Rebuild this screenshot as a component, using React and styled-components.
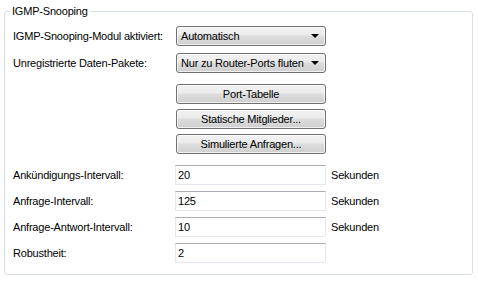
import styled, { createGlobalStyle } from 'styled-components';

const GlobalStyle = createGlobalStyle`
  body {
    margin: 0;
    background: #fff;
    font-family: "Liberation Sans", Arial, sans-serif;
    font-size: 11px;
    letter-spacing: -0.2px;
    color: #000;
  }
`;

const Page = styled.div`
  padding: 5px 5px 0 4px;
  width: 478px;
  height: 281px;
  box-sizing: border-box;
`;

const Group = styled.fieldset`
  margin: 0;
  padding: 0 0 10px 0;
  border: 1px solid #d5dfe5;
  border-radius: 3px;
  box-sizing: border-box;
  height: 270px;
`;

const Legend = styled.legend`
  margin-left: 5px;
  padding: 0 2px;
  line-height: 13px;
`;

const Content = styled.div`
  display: flex;
  flex-direction: column;
  padding: 8px 0 0 8px;
`;

const Row = styled.div`
  display: grid;
  grid-template-columns: 158px 150px auto;
  column-gap: 5px;
  align-items: center;
  margin-top: ${(p) => p.$top || 0}px;
`;

const Label = styled.span`
  white-space: nowrap;
`;

const raised = `
  border: 1px solid #707070;
  border-radius: 3px;
  box-sizing: border-box;
  height: 20px;
  background: linear-gradient(#f2f2f2 0%, #ebebeb 45%, #dddddd 50%, #cfcfcf 100%);
  box-shadow: inset 0 0 0 1px rgba(255, 255, 255, 0.7);
  font: inherit;
  letter-spacing: inherit;
  color: #000;
`;

const Select = styled.div`
  ${raised}
  grid-column: 2;
  display: flex;
  align-items: center;
  justify-content: space-between;
  padding: 0 6px 0 4px;
  white-space: nowrap;
`;

const Arrow = styled.span`
  flex: none;
  width: 0;
  height: 0;
  border-left: 4px solid transparent;
  border-right: 4px solid transparent;
  border-top: 4px solid #000;
`;

const Button = styled.button`
  ${raised}
  grid-column: 2;
  padding: 0;
  text-align: center;
`;

const Input = styled.input`
  grid-column: 2;
  margin-left: -1px;
  width: 151px;
  height: 20px;
  box-sizing: border-box;
  border: 1px solid #e3e9ef;
  border-top-color: #abadb3;
  padding: 0 0 0 2px;
  font: inherit;
  letter-spacing: inherit;
  color: #000;
  outline: none;
`;

const Unit = styled.span``;

const intervals = [
  { label: 'Ankündigungs-Intervall:', value: '20', unit: 'Sekunden' },
  { label: 'Anfrage-Intervall:', value: '125', unit: 'Sekunden' },
  { label: 'Anfrage-Antwort-Intervall:', value: '10', unit: 'Sekunden' },
  { label: 'Robustheit:', value: '2' },
];

const App = () => {
  return (
    <Page>
      <GlobalStyle />
      <Group>
        <Legend>IGMP-Snooping</Legend>
        <Content>
          <Row>
            <Label>IGMP-Snooping-Modul aktiviert:</Label>
            <Select>
              Automatisch
              <Arrow />
            </Select>
          </Row>
          <Row $top={7}>
            <Label>Unregistrierte Daten-Pakete:</Label>
            <Select>
              Nur zu Router-Ports fluten
              <Arrow />
            </Select>
          </Row>
          <Row $top={11}>
            <Button>Port-Tabelle</Button>
          </Row>
          <Row $top={5}>
            <Button>Statische Mitglieder...</Button>
          </Row>
          <Row $top={5}>
            <Button>Simulierte Anfragen...</Button>
          </Row>
          {intervals.map((it, i) => (
            <Row key={it.label} $top={i === 0 ? 11 : 6}>
              <Label>{it.label}</Label>
              <Input defaultValue={it.value} />
              {it.unit && <Unit>{it.unit}</Unit>}
            </Row>
          ))}
        </Content>
      </Group>
    </Page>
  );
};

export default App;
